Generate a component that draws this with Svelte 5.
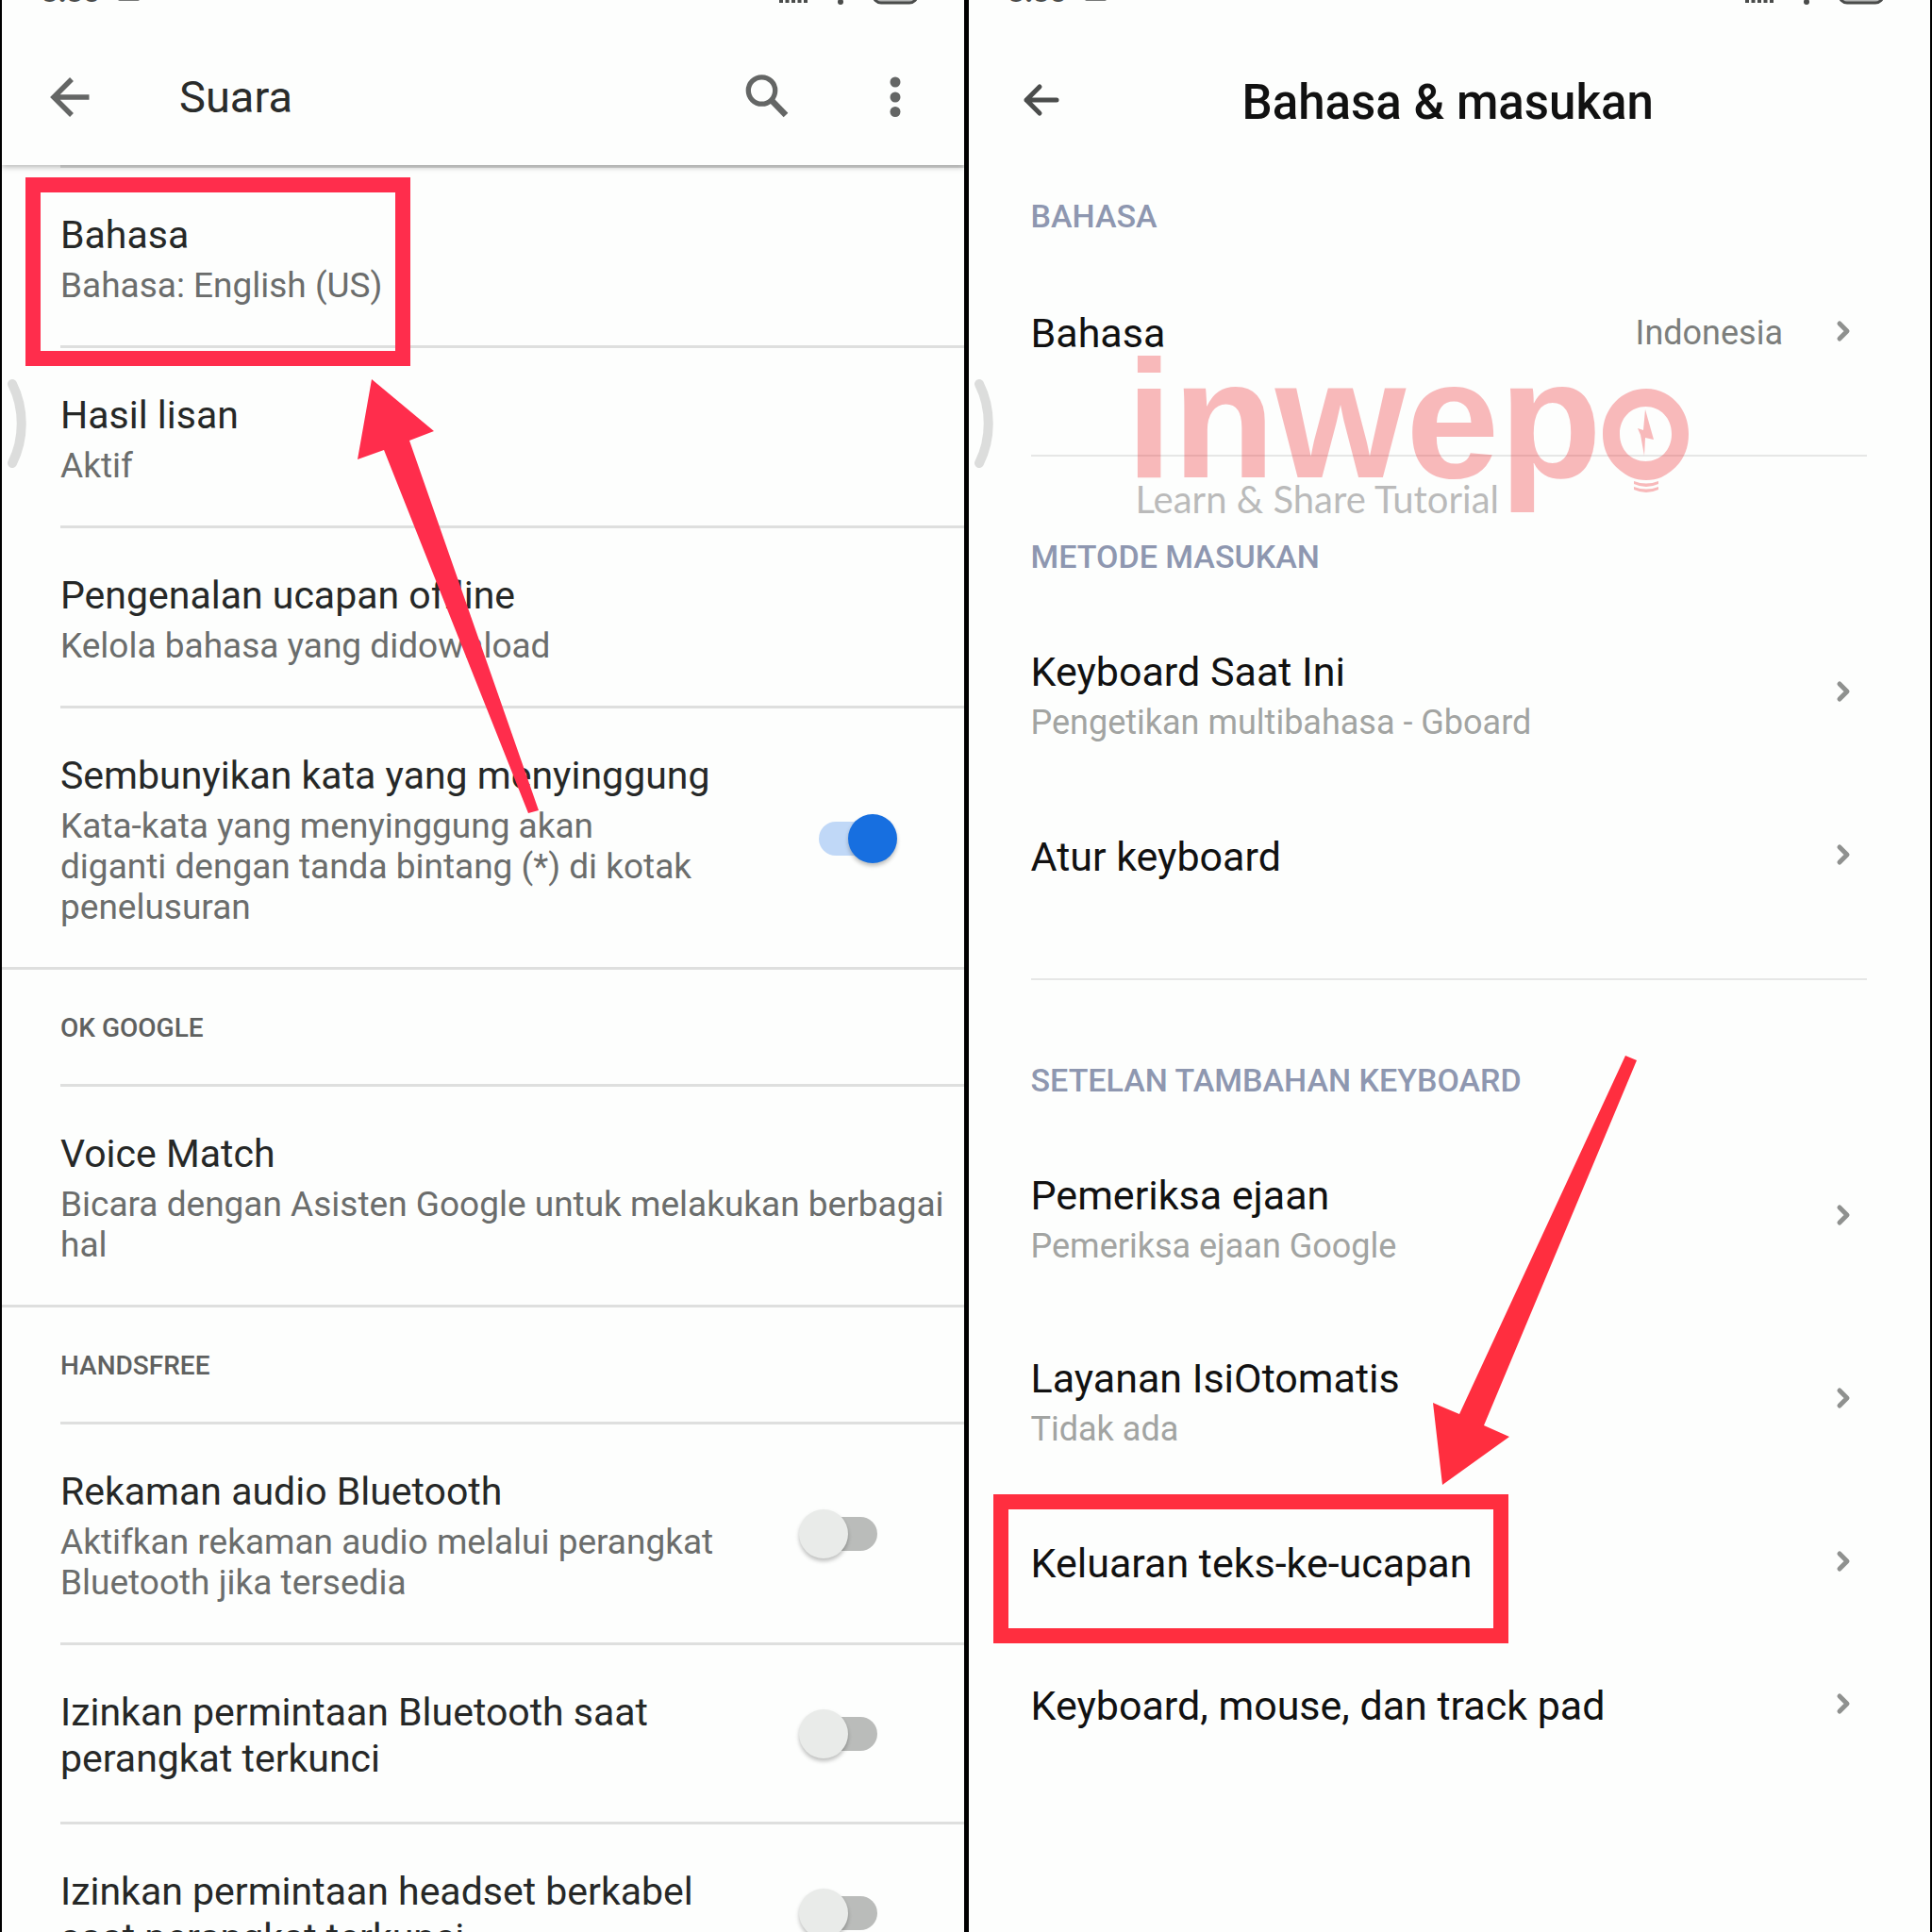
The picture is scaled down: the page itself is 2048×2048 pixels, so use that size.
<script>
  let voiceGroups = $state([
    {
      items: [
        { title: 'Bahasa', sub: 'Bahasa: English (US)', marked: true },
        { title: 'Hasil lisan', sub: 'Aktif' },
        { title: 'Pengenalan ucapan offline', sub: 'Kelola bahasa yang didownload' },
        {
          title: 'Sembunyikan kata yang menyinggung',
          sub: 'Kata-kata yang menyinggung akan\ndiganti dengan tanda bintang (*) di kotak\npenelusuran',
          toggle: true,
          on: true
        }
      ]
    },
    {
      heading: 'OK GOOGLE',
      items: [
        { title: 'Voice Match', sub: 'Bicara dengan Asisten Google untuk melakukan berbagai\nhal' }
      ]
    },
    {
      heading: 'HANDSFREE',
      items: [
        {
          title: 'Rekaman audio Bluetooth',
          sub: 'Aktifkan rekaman audio melalui perangkat\nBluetooth jika tersedia',
          toggle: true,
          on: false
        },
        { title: 'Izinkan permintaan Bluetooth saat perangkat terkunci', toggle: true, on: false },
        { title: 'Izinkan permintaan headset berkabel saat perangkat terkunci', toggle: true, on: false }
      ]
    }
  ]);

  const inputGroups = [
    { heading: 'BAHASA', items: [{ title: 'Bahasa', value: 'Indonesia' }] },
    {
      heading: 'METODE MASUKAN',
      items: [
        { title: 'Keyboard Saat Ini', sub: 'Pengetikan multibahasa - Gboard' },
        { title: 'Atur keyboard' }
      ]
    },
    {
      heading: 'SETELAN TAMBAHAN KEYBOARD',
      items: [
        { title: 'Pemeriksa ejaan', sub: 'Pemeriksa ejaan Google' },
        { title: 'Layanan IsiOtomatis', sub: 'Tidak ada' },
        { title: 'Keluaran teks-ke-ucapan', marked: true },
        { title: 'Keyboard, mouse, dan track pad' }
      ]
    }
  ];
</script>

{#snippet statusBar()}
  <div class="status">
    <span class="time">3:38</span>
    <svg class="status-note" width="24" height="20" viewBox="0 0 24 20">
      <rect x="0" y="0" width="23" height="13" rx="2" fill="#777978" />
    </svg>
    <svg class="status-icons" width="152" height="24" viewBox="0 0 152 24">
      <path d="M4 12v7M10.500 10v9M17 8v11M23.500 5v14M30 2v17" stroke="#4a4c4b" stroke-width="4" />
      <path d="M54 2l13 13 13-13" fill="none" stroke="#4a4c4b" stroke-width="4" />
      <circle cx="67" cy="18" r="3" fill="#4a4c4b" />
      <rect x="102" y="-6" width="46" height="25" rx="8" fill="#b4b6b5" stroke="#4a4c4b" stroke-width="3" />
    </svg>
  </div>
{/snippet}

{#snippet edgeHandle()}
  <svg class="handle" width="30" height="96" viewBox="0 0 30 96">
    <path d="M11 6c13 26 13 58 0 84" fill="none" stroke="#dcdddc" stroke-width="10" stroke-linecap="round" />
  </svg>
{/snippet}

<main>
  <section class="panel voice">
    {@render statusBar()}
    <header>
      <button class="icon" aria-label="Kembali">
        <svg width="48" height="48" viewBox="0 0 48 48" fill="none" stroke="#646665" stroke-width="5.500">
          <path d="M44.500 24H8M26 5L7 24l19 19" />
        </svg>
      </button>
      <h1>Suara</h1>
      <button class="icon" aria-label="Telusuri">
        <svg width="48" height="48" viewBox="0 0 48 48" fill="none" stroke="#646665">
          <circle cx="18.500" cy="17" r="14.200" stroke-width="5.300" />
          <path d="M29 27.500L44 43" stroke-width="6.500" />
        </svg>
      </button>
      <button class="icon more" aria-label="Opsi lainnya">
        <svg width="48" height="48" viewBox="0 0 48 48" fill="#646665">
          <circle cx="24" cy="8" r="5.500" />
          <circle cx="24" cy="24" r="5.500" />
          <circle cx="24" cy="39.500" r="5.500" />
        </svg>
      </button>
    </header>

    {#each voiceGroups as group, g}
      {#if group.heading}
        <h2>{group.heading}</h2>
      {/if}
      <ul>
        {#each group.items as item, i}
          <li>
            <label class="text" for={item.toggle ? `switch-${g}-${i}` : undefined}>
              <span class="title">{item.title}</span>
              {#if item.sub}<span class="sub">{item.sub}</span>{/if}
            </label>
            {#if item.toggle}
              <input id="switch-{g}-{i}" class="switch" type="checkbox" bind:checked={item.on} />
            {/if}
            {#if item.marked}<div class="mark"></div>{/if}
          </li>
        {/each}
      </ul>
    {/each}

    {@render edgeHandle()}
    <svg class="arrow" width="194" height="462" viewBox="0 0 194 462">
      <path d="M15 1L81 56 55 66 192 458 181 461 28 76 0 86z" fill="#ff2d4c" />
    </svg>
  </section>

  <section class="panel input">
    {@render statusBar()}
    <header>
      <button class="icon" aria-label="Kembali">
        <svg width="40" height="40" viewBox="0 0 40 40" fill="none" stroke="#4b4d4c" stroke-width="5" stroke-linecap="round" stroke-linejoin="round">
          <path d="M36 20H4M18 6L4 20l14 14" />
        </svg>
      </button>
      <h1>Bahasa &amp; masukan</h1>
    </header>

    {#each inputGroups as group}
      <div class="group">
        <h2>{group.heading}</h2>
        <ul>
          {#each group.items as item}
            <li class:double={item.sub}>
              <div class="text">
                <span class="title">{item.title}</span>
                {#if item.sub}<span class="sub">{item.sub}</span>{/if}
              </div>
              {#if item.value}<span class="value">{item.value}</span>{/if}
              <svg class="chevron" width="16" height="24" viewBox="0 0 16 24">
                <path d="M4 4l8 8-8 8" fill="none" stroke="#8f918f" stroke-width="5" stroke-linecap="round" stroke-linejoin="round" />
              </svg>
              {#if item.marked}<div class="mark"></div>{/if}
            </li>
          {/each}
        </ul>
      </div>
    {/each}

    <div class="watermark">
      <span class="brand">inwep</span>
      <svg class="bulb" width="92" height="110" viewBox="0 0 92 110" fill="#ed1c24">
        <path fill-rule="evenodd" d="M46 0c25 0 45 21 45 48 0 24-13 38-29 46-9 4-23 4-32 0C14 86 0 72 0 48 0 21 20 0 46 0zM45.500 19C30 19 18 31 18 48s12 29 27.500 29S73 65 73 48 61 19 45.500 19z" />
        <path d="M45 22l9 32-9-2-1 19-4-22-3-7 6 2z" />
        <path d="M33 98q13 5 26 0v3q-13 6-26 0zM33 104q13 5 26 0v3q-13 6-26 0z" />
      </svg>
      <span class="tagline">Learn &amp; Share Tutorial</span>
    </div>

    {@render edgeHandle()}
    <svg class="arrow" width="218" height="458" viewBox="0 0 218 458">
      <path d="M204 1L216 6 54 393 81 405 10 456 0 369 28 381z" fill="#ff2e3f" />
    </svg>
  </section>
</main>

<style>
  :global(body) {
    margin: 0;
    overflow: hidden;
  }

  main {
    display: grid;
    grid-template-columns: 1fr 1fr;
    gap: 5px;
    height: 100vh;
    padding: 0 2px;
    background: #000;
    font-family: Roboto, 'Liberation Sans', sans-serif;
  }

  .panel {
    position: relative;
    overflow: hidden;
    background: #fdfefd;
  }

  .status {
    display: flex;
    align-items: flex-end;
    height: 8px;
    padding: 0 46px 0 42px;
    overflow: hidden;
    color: #4a4c4b;
  }

  .time {
    flex: none;
    font-size: 31px;
    font-weight: 700;
    line-height: 32px;
  }

  .status-note {
    flex: none;
    margin-left: 19px;
  }

  .status-icons {
    flex: none;
    margin-left: auto;
  }

  header {
    display: flex;
    align-items: center;
    box-sizing: border-box;
  }

  h1,
  h2,
  ul {
    margin: 0;
    padding: 0;
    list-style: none;
  }

  .icon {
    display: flex;
    flex: none;
    padding: 0;
    border: 0;
    background: none;
  }

  li {
    position: relative;
    display: flex;
    align-items: center;
    box-sizing: border-box;
  }

  .text {
    display: flex;
    flex: 1;
    flex-direction: column;
  }

  .sub {
    white-space: pre-line;
  }

  .mark {
    position: absolute;
    z-index: 1;
    border: 16px solid #ff2d4c;
    box-sizing: border-box;
  }

  /* Suara */

  .voice header {
    position: relative;
    z-index: 1;
    height: 167px;
    padding: 22px 49px 0 48px;
    box-shadow: 0 2px 6px rgba(0, 0, 0, 0.3);
    clip-path: inset(0 0 -12px);
  }

  .voice h1 {
    flex: 1;
    margin-left: 92px;
    color: #2a2c2b;
    font-size: 47px;
    font-weight: 400;
  }

  .voice .more {
    margin-left: 88px;
  }

  .voice h2 {
    padding: 41px 62px 39px;
    border-top: 3px solid #dedfde;
    color: #5f6160;
    font-size: 28px;
    font-weight: 500;
    line-height: 41px;
  }

  .voice li {
    margin-left: 62px;
    padding: 47px 14px 42px 0;
    border-top: 3px solid #dedfde;
  }

  .voice .text {
    gap: 7px;
  }

  .voice .title {
    color: #262827;
    font-size: 41px;
    line-height: 49px;
  }

  .voice .sub {
    color: #6b6d6c;
    font-size: 37px;
    line-height: 43px;
  }

  .voice .mark {
    top: 10px;
    left: -37px;
    width: 408px;
    height: 200px;
  }

  .switch {
    position: relative;
    flex: none;
    width: 104px;
    height: 52px;
    margin: 0 57px 4px 60px;
    appearance: none;
  }

  .switch::before {
    position: absolute;
    inset: 8px 21px;
    border-radius: 18px;
    background: #babcba;
    content: '';
  }

  .switch::after {
    position: absolute;
    top: 0;
    left: 0;
    width: 52px;
    height: 52px;
    border-radius: 50%;
    background: #e9ebe9;
    box-shadow: 0 3px 4px rgba(0, 0, 0, 0.25);
    content: '';
  }

  .switch:checked::before {
    background: #c0d8f7;
  }

  .switch:checked::after {
    left: 52px;
    background: #176fe0;
  }

  .voice .arrow {
    position: absolute;
    top: 401px;
    left: 377px;
  }

  /* Bahasa & masukan */

  .input header {
    height: 199px;
    padding: 18px 58px 22px 57px;
  }

  .input h1 {
    flex: 1;
    margin-right: 42px;
    padding-top: 5px;
    color: #111;
    font-size: 51px;
    font-weight: 500;
    text-align: center;
  }

  .group {
    margin: 0 67px 0 66px;
    padding-bottom: 56px;
  }

  .group + .group {
    padding-top: 84px;
    border-top: 2px solid #e6e7e6;
  }

  .input h2 {
    margin-bottom: 24px;
    color: #8e97b0;
    font-size: 34px;
    font-weight: 500;
    line-height: 44px;
  }

  .input li {
    min-height: 151px;
    padding-right: 17px;
  }

  .input .double {
    min-height: 194px;
  }

  .input .text {
    gap: 5px;
    padding-top: 4px;
  }

  .input .double .text {
    padding-top: 10px;
  }

  .input .title {
    color: #111;
    font-size: 43px;
    line-height: 50px;
  }

  .input .sub {
    color: #a2a4a2;
    font-size: 36px;
    line-height: 48px;
  }

  .value {
    margin-right: 56px;
    padding-top: 4px;
    color: #7c7e7c;
    font-size: 36px;
  }

  .input .mark {
    top: 5px;
    left: -40px;
    width: 546px;
    height: 158px;
    border-color: #ff2e3f;
  }

  .input .arrow {
    position: absolute;
    top: 1118px;
    left: 492px;
  }

  .handle {
    position: absolute;
    top: 401px;
    left: 0;
  }

  .watermark {
    position: absolute;
    top: 341px;
    left: 167px;
    opacity: 0.3;
  }

  .brand {
    display: block;
    color: #ed1c24;
    font-family: 'Liberation Sans', sans-serif;
    font-size: 178px;
    font-weight: 700;
    line-height: 207px;
  }

  .bulb {
    position: absolute;
    top: 71px;
    left: 505px;
  }

  .tagline {
    position: absolute;
    top: 164px;
    left: 10px;
    color: #222;
    font-family: 'Liberation Sans Narrow', Lato, sans-serif;
    font-size: 40px;
    line-height: 48px;
    white-space: nowrap;
  }
</style>
